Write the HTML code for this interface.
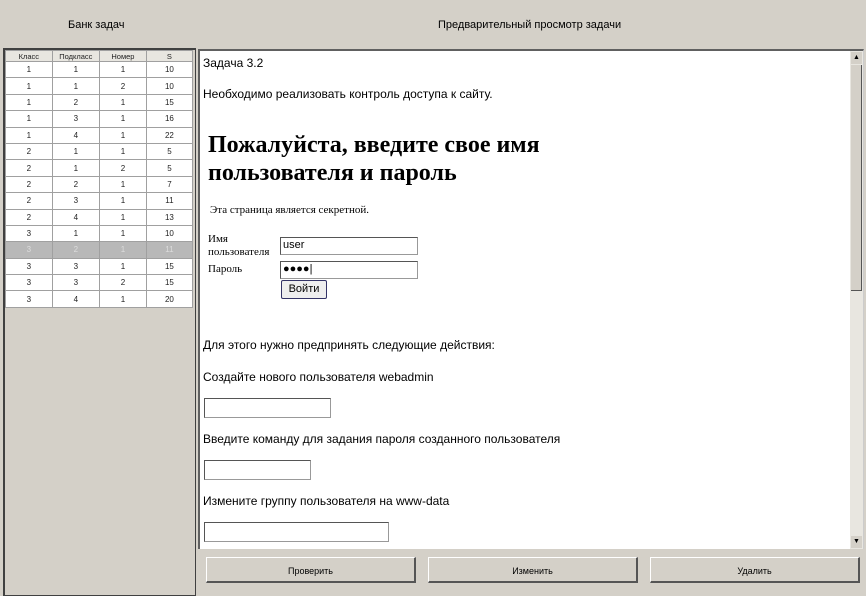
<!DOCTYPE html>
<html><head><meta charset="utf-8"><style>
body{margin:0;width:866px;height:589px;background:#d4d0c8;position:relative;overflow:hidden;font-family:"Liberation Sans",sans-serif;}
.t{position:absolute;font-size:11px;color:#000;white-space:nowrap}
#left{position:absolute;left:3px;top:48px;width:190px;height:545px;border:1px solid #404040;border-left:2px solid #404040;border-top:2px solid #404040;}
table{border-collapse:collapse;position:absolute;left:0;top:0;width:188px;font-size:8px;color:#222}
td{border:1px solid #a0a0a0;text-align:center;height:15.4px;padding:0;background:#fff;width:47px}
tr.h td{background:#e8e6e0;height:10px;font-size:7.5px}
tr.sel td{background:#b8b8b8;color:#ddd}
#right{position:absolute;left:198px;top:49px;width:663px;height:498px;background:#fff;border-top:2px solid #606060;border-left:2px solid #606060;border-right:1px solid #ccc;}
#sb{position:absolute;right:0;top:0;width:13px;height:498px;background:#e8e6e0}
.in{position:absolute;border:1px solid #555;border-bottom-color:#999;border-right-color:#999;background:#fff}
.btn{position:absolute;top:557px;width:210px;height:26px;background:#d4d0c8;border:1px solid #fff;border-right:2px solid #555;border-bottom:2px solid #555;box-sizing:border-box;font-size:9px;text-align:center;line-height:26px}
.serif{font-family:"Liberation Serif",serif}
</style></head><body>
<div class="t" style="left:68px;top:19px">Банк задач</div>
<div class="t" style="left:438px;top:19px">Предварительный просмотр задачи</div>
<div id="left"><table>
<tr class="h"><td>Класс</td><td>Подкласс</td><td>Номер</td><td>S</td></tr>
<tr><td>1</td><td>1</td><td>1</td><td>10</td></tr>
<tr><td>1</td><td>1</td><td>2</td><td>10</td></tr>
<tr><td>1</td><td>2</td><td>1</td><td>15</td></tr>
<tr><td>1</td><td>3</td><td>1</td><td>16</td></tr>
<tr><td>1</td><td>4</td><td>1</td><td>22</td></tr>
<tr><td>2</td><td>1</td><td>1</td><td>5</td></tr>
<tr><td>2</td><td>1</td><td>2</td><td>5</td></tr>
<tr><td>2</td><td>2</td><td>1</td><td>7</td></tr>
<tr><td>2</td><td>3</td><td>1</td><td>11</td></tr>
<tr><td>2</td><td>4</td><td>1</td><td>13</td></tr>
<tr><td>3</td><td>1</td><td>1</td><td>10</td></tr>
<tr class="sel"><td>3</td><td>2</td><td>1</td><td>11</td></tr>
<tr><td>3</td><td>3</td><td>1</td><td>15</td></tr>
<tr><td>3</td><td>3</td><td>2</td><td>15</td></tr>
<tr><td>3</td><td>4</td><td>1</td><td>20</td></tr>
</table></div>
<div id="right">
<div class="t" style="left:3px;top:5px;font-size:12px">Задача 3.2</div>
<div class="t" style="left:3px;top:36px;font-size:12px">Необходимо реализовать контроль доступа к сайту.</div>
<div class="t serif" style="left:8px;top:80px;font-size:24px;font-weight:bold;line-height:28px">Пожалуйста, введите свое имя<br>пользователя и пароль</div>
<div class="t serif" style="left:10px;top:153px;font-size:11px">Эта страница является секретной.</div>
<div class="t serif" style="left:8px;top:182px;font-size:11px;line-height:13px">Имя<br>пользователя</div>
<div class="t serif" style="left:8px;top:212px;font-size:11px">Пароль</div>
<div class="in" style="left:80px;top:186px;width:134px;height:16px;font-size:11px;line-height:14px;padding-left:2px">user</div>
<div class="in" style="left:80px;top:210px;width:134px;height:16px;font-size:11px;line-height:14px;padding-left:2px">●●●●|</div>
<div style="position:absolute;left:81px;top:229px;width:44px;height:17px;border:1px solid #336;border-radius:2px;background:#eee;font-size:11px;text-align:center;line-height:16px">Войти</div>
<div class="t" style="left:3px;top:287px;font-size:12px">Для этого нужно предпринять следующие действия:</div>
<div class="t" style="left:3px;top:319px;font-size:12px">Создайте нового пользователя webadmin</div>
<div class="in" style="left:4px;top:347px;width:125px;height:18px"></div>
<div class="t" style="left:3px;top:381px;font-size:12px">Введите команду для задания пароля созданного пользователя</div>
<div class="in" style="left:4px;top:409px;width:105px;height:18px"></div>
<div class="t" style="left:3px;top:443px;font-size:12px">Измените группу пользователя на www-data</div>
<div class="in" style="left:4px;top:471px;width:183px;height:18px"></div>
<div id="sb">
<div style="position:absolute;left:1px;top:1px;width:11px;height:12px;background:#d4d0c8;font-size:7px;text-align:center;line-height:12px">▲</div>
<div style="position:absolute;left:1px;top:14px;width:10px;height:225px;background:#d4d0c8;border-right:1px solid #555;border-bottom:1px solid #555"></div>
<div style="position:absolute;left:1px;bottom:1px;width:11px;height:12px;background:#d4d0c8;font-size:7px;text-align:center;line-height:12px">▼</div>
</div>
</div>
<div class="btn" style="left:206px">Проверить</div>
<div class="btn" style="left:428px">Изменить</div>
<div class="btn" style="left:650px">Удалить</div>
</body></html>
